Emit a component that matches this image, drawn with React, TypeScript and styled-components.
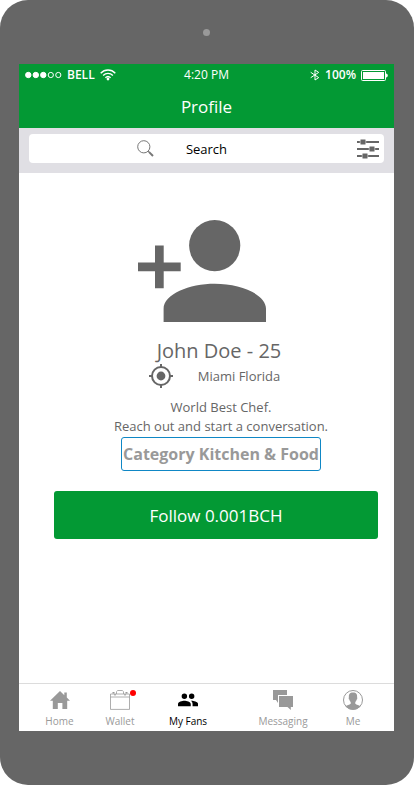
import React from 'react';
import styled, { createGlobalStyle } from 'styled-components';

const green = '#039934';
const grey = '#666666';
const muted = '#999999';

const GlobalStyle = createGlobalStyle`
  * { box-sizing: border-box; }
  body {
    margin: 0;
    background: #fff;
    font-family: 'Open Sans', 'Noto Sans', sans-serif;
  }
  button, input { font: inherit; border: 0; padding: 0; background: none; }
  svg { display: block; flex: none; }
`;

const Phone = styled.div`
  display: flex;
  flex-direction: column;
  min-height: 100vh;
  padding: 0 20px 54px 19px;
  border-radius: 28px;
  background: ${grey};
`;

const Bezel = styled.div`
  display: flex;
  align-items: center;
  justify-content: center;
  height: 64px;
`;

const Camera = styled.span`
  width: 7px;
  height: 7px;
  border-radius: 50%;
  background: #999;
`;

const Screen = styled.div`
  display: flex;
  flex: 1;
  flex-direction: column;
  background: #fff;
`;

const Header = styled.header`
  background: ${green};
  color: #fff;
`;

const StatusBar = styled.div`
  display: grid;
  grid-template-columns: 1fr auto 1fr;
  align-items: center;
  height: 20px;
  padding: 0 6px;
  font-size: 12px;
  line-height: 22px;
`;

const StatusGroup = styled.div<{ $end?: boolean }>`
  display: flex;
  align-items: center;
  justify-content: ${(p) => (p.$end ? 'flex-end' : 'flex-start')};
  gap: 5px;
  font-weight: 600;
`;

const Title = styled.h1`
  margin: 0;
  padding-top: 2px;
  font-size: 17px;
  font-weight: 400;
  line-height: 42px;
  text-align: center;
`;

const SearchBand = styled.div`
  padding: 6px 10px 10px;
  background: #e0dfe4;
`;

const SearchField = styled.div`
  display: grid;
  grid-template-columns: 1fr 106px 1fr;
  align-items: center;
  height: 29px;
  padding: 0 5px;
  border-radius: 4px;
  background: #fff;
`;

const SearchLabel = styled.label`
  display: flex;
  justify-content: flex-end;
`;

const SearchInput = styled.input`
  width: 100%;
  height: 29px;
  color: #000;
  font-size: 13px;
  text-align: center;
  outline: none;
  &::placeholder { color: #000; opacity: 1; }
`;

const FilterButton = styled.button`
  justify-self: end;
  cursor: pointer;
`;

const Profile = styled.main`
  display: flex;
  flex: 1;
  flex-direction: column;
  align-items: center;
  padding: 47px 16px 24px 35px;
  color: ${grey};
`;

const Avatar = styled.div`
  padding-right: 28px;
`;

const Name = styled.h2`
  margin: 16px 0 0;
  padding-left: 6px;
  font-size: 20px;
  font-weight: 400;
  line-height: 26px;
`;

const Location = styled.div`
  display: flex;
  align-items: center;
  gap: 25px;
  padding-right: 3px;
  font-size: 13px;
  line-height: 24px;
`;

const Bio = styled.p`
  margin: 10px 0 0;
  padding-left: 10px;
  font-size: 13px;
  line-height: 19px;
  text-align: center;
`;

const CategoryRow = styled.div`
  margin-top: 1px;
  padding-left: 10px;
`;

const Category = styled.button`
  padding: 0 1px;
  border: 1px solid #0f87c5;
  border-radius: 3px;
  color: ${muted};
  font-size: 16px;
  font-weight: 700;
  line-height: 32px;
  cursor: pointer;
`;

const FollowButton = styled.button`
  width: 100%;
  margin-top: 20px;
  padding-top: 2px;
  border-radius: 3px;
  background: ${green};
  color: #fff;
  font-size: 17px;
  line-height: 46px;
  cursor: pointer;
`;

const TabBar = styled.nav`
  display: grid;
  grid-template-columns: 61fr 60fr 76fr 114fr 26fr;
  height: 48px;
  padding: 0 28px 0 10px;
  border-top: 1px solid #dcdcdc;
`;

const Tab = styled.a<{ $active?: boolean }>`
  display: flex;
  flex-direction: column;
  align-items: center;
  gap: 4px;
  padding-top: 6px;
  color: ${(p) => (p.$active ? '#000' : muted)};
  font-size: 10px;
  line-height: 15px;
  text-decoration: none;
  white-space: nowrap;
`;

const TabIcon = styled.span`
  position: relative;
  display: block;
`;

const Badge = styled.span`
  position: absolute;
  top: 0;
  right: -6px;
  width: 6px;
  height: 6px;
  border-radius: 50%;
  background: #f00;
`;

const SignalIcon = () => (
  <svg width="37" height="8" viewBox="0 0 37 8" fill="#fff" stroke="#fff" aria-hidden="true">
    <circle cx="3.3" cy="4" r="2.7" />
    <circle cx="10.8" cy="4" r="2.7" />
    <circle cx="18.3" cy="4" r="2.7" />
    <circle cx="25.8" cy="4" r="2.6" fill="none" />
    <circle cx="33.3" cy="4" r="2.6" fill="none" />
  </svg>
);

const WifiIcon = () => (
  <svg width="16" height="12" viewBox="0 0 16 12" fill="none" stroke="#fff" strokeWidth="1.4" aria-hidden="true">
    <path d="M.7 4.2C4.8-.1 11.2-.1 15.3 4.2M3.1 6.5c2.8-2.9 7-2.9 9.8 0M5.4 8.7c1.5-1.5 3.7-1.5 5.2 0" />
    <circle cx="8" cy="10" r="1.4" fill="#fff" stroke="none" />
  </svg>
);

const BluetoothIcon = () => (
  <svg width="10" height="12" viewBox="0 0 10 12" fill="none" stroke="#fff" aria-hidden="true">
    <path d="M.7 3.3 8.7 8.6 5 11V1l3.7 2.4L.7 8.7" />
  </svg>
);

const BatteryIcon = () => (
  <svg width="27" height="11" viewBox="0 0 27 11" aria-hidden="true">
    <rect x=".5" y=".5" width="24" height="10" rx="1" fill="none" stroke="#fff" />
    <rect x="2" y="2" width="21" height="7" fill="#fff" />
    <path d="M25 3.5c2.4.4 2.4 3.6 0 4z" fill="#fff" />
  </svg>
);

const SearchIcon = () => (
  <svg width="17" height="17" viewBox="0 0 17 17" fill="none" stroke="#777" aria-hidden="true">
    <circle cx="6.8" cy="6.8" r="6.1" />
    <path d="m11.1 11.1 1.2 1.2" />
    <path d="m11.9 11.9 4.1 4.1" strokeWidth="2" />
  </svg>
);

const FilterIcon = () => (
  <svg width="22" height="20" viewBox="0 0 22 20" fill={grey} aria-hidden="true">
    <path d="M0 2h22v2H0zM0 9h22v2H0zM0 16h22v2H0z" />
    <g stroke="#fff" strokeWidth=".5">
      <rect x="3.2" y=".2" width="5.6" height="5.6" rx=".8" />
      <rect x="12.2" y="7.2" width="5.6" height="5.6" rx=".8" />
      <rect x="5.2" y="14.2" width="5.6" height="5.6" rx=".8" />
    </g>
  </svg>
);

const PersonAddIcon = () => (
  <svg width="128" height="102" viewBox="0 0 128 102" fill={grey} role="img" aria-label="Add person">
    <circle cx="76.7" cy="25.6" r="25.6" />
    <path d="M76.8 63.8c-25.4 0-51.2 10.3-51.2 25V102H128V88.8c0-14.7-25.8-25-51.2-25z" />
    <path d="M17 25.5h8.7v17h17v8.7h-17v17H17v-17H0v-8.7h17z" />
  </svg>
);

const LocateIcon = () => (
  <svg width="24" height="24" viewBox="0 0 24 24" fill="none" stroke={grey} strokeWidth="2" aria-hidden="true">
    <circle cx="12" cy="12" r="9" />
    <circle cx="12" cy="12" r="4.4" fill={grey} stroke="none" />
    <path d="M12 0v3M12 21v3M0 12h3M21 12h3" />
  </svg>
);

const HomeIcon = () => (
  <svg width="20" height="20" viewBox="0 0 20 20" fill={muted} aria-hidden="true">
    <path d="M10 1 0 10.8h2.8V19h5v-6h4.6v6h4.8v-8.2H20l-3.2-3.2V2.5h-2.5v2.7z" />
  </svg>
);

const WalletIcon = () => (
  <svg width="20" height="20" viewBox="0 0 20 20" fill="none" stroke={muted} strokeWidth=".8" aria-hidden="true">
    <path d="M.5 4h19v15.4H.5zM.5 7h19" />
    <path d="M6.5 4V1.6L7.700.5h4.600l1.200 1.100V4" />
    <path d="M2.500 2.800h2M15.500 2.800h2M5 4v1.500M15 4v1.500" strokeWidth="1.400" />
  </svg>
);

const FansIcon = () => (
  <svg width="20" height="20" viewBox="2 2 20 20" fill="#000" aria-hidden="true">
    <g transform="translate(1.1 .9) scale(.91)">
      <path d="M16 11a3 3 0 1 0 0-6 3 3 0 0 0 0 6zM8 11a3 3 0 1 0 0-6 3 3 0 0 0 0 6zM8 13c-2.33 0-7 1.17-7 3.5V19h14v-2.5C15 14.17 10.33 13 8 13zM16 13c-.29 0-.62.02-.97.05C16.19 13.89 17 15.02 17 16.5V19h6v-2.5C23 14.17 18.33 13 16 13z" />
    </g>
  </svg>
);

const MessagesIcon = () => (
  <svg width="20" height="20" viewBox="0 0 20 20" fill={muted} aria-hidden="true">
    <path d="M0 0h14v5H5v8l-2-3H0z" />
    <path d="M6 6h14v11h-2.200v3L14.500 17H6z" />
  </svg>
);

const MeIcon = () => (
  <svg width="20" height="20" viewBox="0 0 20 20" fill={muted} aria-hidden="true">
    <circle cx="10" cy="10" r="9.5" fill="none" stroke={muted} />
    <path d="M10 2.500c-3.300 0-4.400 1.800-4.100 4.700-.4.400-.2 2 .4 2.400.3 1.300.8 2 1.400 2.500v1.700c-1.300 1-3.500 1.200-5.200 2.400C4.500 18.400 7.200 19.600 10 19.600s5.500-1.200 7.500-3.400c-1.700-1.200-3.900-1.400-5.200-2.400v-1.700c.6-.5 1.100-1.200 1.400-2.500.6-.4.8-2 .4-2.400.3-2.900-.8-4.700-4.100-4.700z" />
  </svg>
);

const tabs = [
  { label: 'Home', Icon: HomeIcon },
  { label: 'Wallet', Icon: WalletIcon, badge: true },
  { label: 'My Fans', Icon: FansIcon, active: true },
  { label: 'Messaging', Icon: MessagesIcon },
  { label: 'Me', Icon: MeIcon },
];

export default function App() {
  return (
    <>
      <GlobalStyle />
      <Phone>
        <Bezel><Camera /></Bezel>
        <Screen>
          <Header>
            <StatusBar>
              <StatusGroup><SignalIcon />BELL<WifiIcon /></StatusGroup>
              <span>4:20 PM</span>
              <StatusGroup $end><BluetoothIcon />100%<BatteryIcon /></StatusGroup>
            </StatusBar>
            <Title>Profile</Title>
          </Header>
          <SearchBand>
            <SearchField>
              <SearchLabel htmlFor="search" aria-label="Search"><SearchIcon /></SearchLabel>
              <SearchInput id="search" type="text" placeholder="Search" />
              <FilterButton type="button" aria-label="Filters"><FilterIcon /></FilterButton>
            </SearchField>
          </SearchBand>
          <Profile>
            <Avatar><PersonAddIcon /></Avatar>
            <Name>John Doe - 25</Name>
            <Location><LocateIcon /><span>Miami Florida</span></Location>
            <Bio>World Best Chef.<br />Reach out and start a conversation.</Bio>
            <CategoryRow><Category type="button">Category Kitchen &amp; Food</Category></CategoryRow>
            <FollowButton type="button">Follow 0.001BCH</FollowButton>
          </Profile>
          <TabBar>
            {tabs.map(({ label, Icon, badge, active }) => (
              <Tab key={label} href="#" $active={active} aria-current={active ? 'page' : undefined}>
                <TabIcon><Icon />{badge && <Badge />}</TabIcon>
                {label}
              </Tab>
            ))}
          </TabBar>
        </Screen>
      </Phone>
    </>
  );
}
